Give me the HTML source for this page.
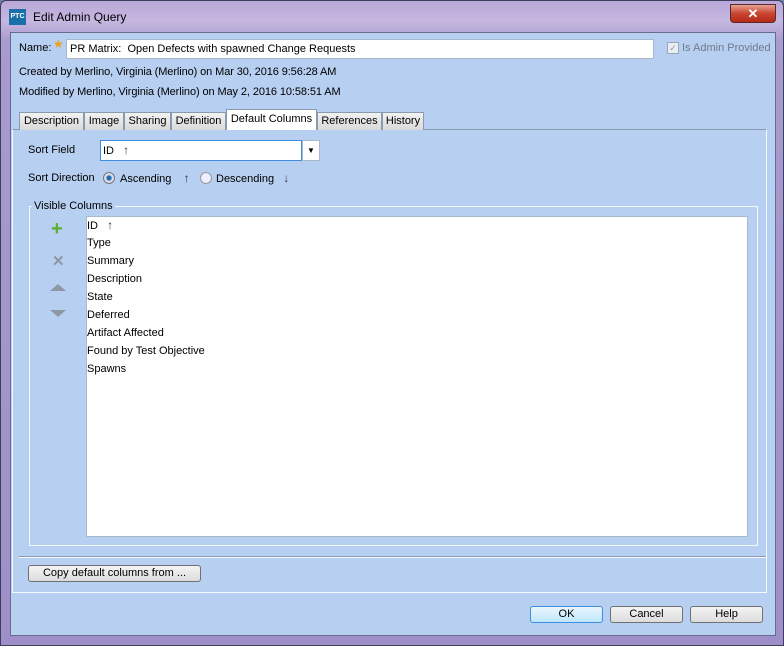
<!DOCTYPE html>
<html><head><style>
*{box-sizing:border-box}
body{margin:0;width:784px;height:646px;overflow:hidden;font-family:"Liberation Sans",sans-serif;font-size:11px;color:#000;background:#6f7fa8;position:relative}
.a{position:absolute}
.frame{left:0;top:0;width:784px;height:646px;background:linear-gradient(180deg,#b9a8d8 0,#c6b7e0 20px,#a89bcf 40px,#9f8fc8 100%);border:1px solid #3d3d5c;border-radius:6px 6px 0 0}
.client{left:10px;top:32px;width:766px;height:604px;background:#b7cff1;border:1px solid #6a6a8a}
.t{white-space:nowrap;line-height:13px}
.tab{top:112px;height:18px;background:linear-gradient(#f2f2f2,#d9d9d9);border:1px solid #8a9ab0;border-bottom:none;text-align:center;line-height:16px}
.btn{background:linear-gradient(#f4f4f4,#dcdcdc);border:1px solid #707070;border-radius:3px;text-align:center;line-height:16px}
.row{left:87px;height:18px;line-height:18px}
.ar{font-weight:bold;color:#334;font-size:12px}
</style></head><body>
<div class="a frame"></div>
<div class="a" style="left:9px;top:9px;width:17px;height:16px;background:#1b6fa8;color:#fff;font-size:7px;font-weight:bold;line-height:16px;text-align:center">PTC</div>
<div class="a t" style="left:33px;top:11px;font-size:12px">Edit Admin Query</div>
<div class="a" style="left:730px;top:4px;width:46px;height:19px;background:linear-gradient(#e8a294,#c9452f 50%,#b52a16);border:1px solid #5a2a2a;border-radius:0 0 4px 4px;color:#fff;font-weight:bold;text-align:center;line-height:17px;font-size:13px">✕</div>
<div class="a client"></div>
<div class="a t" style="left:19px;top:42px">Name:</div>
<div class="a" style="left:53px;top:37px;color:#e9a21a;font-size:12px">★</div>
<div class="a t" style="left:66px;top:39px;width:588px;height:20px;background:#fff;border:1px solid #a9b8cc;padding:3px 3px">PR Matrix:&nbsp; Open Defects with spawned Change Requests</div>
<div class="a" style="left:667px;top:42px;width:12px;height:12px;background:#e8eef6;border:1px solid #9aa8b8;font-size:9px;color:#999;line-height:10px;text-align:center">✓</div>
<div class="a t" style="left:682px;top:42px;color:#707a88">Is Admin Provided</div>
<div class="a t" style="left:19px;top:66px;letter-spacing:-0.1px">Created by Merlino, Virginia (Merlino) on Mar 30, 2016 9:56:28 AM</div>
<div class="a t" style="left:19px;top:86px;letter-spacing:-0.1px">Modified by Merlino, Virginia (Merlino) on May 2, 2016 10:58:51 AM</div>
<div class="a" style="left:12px;top:129px;width:755px;height:464px;border:1px solid #f4f8ff;border-top:1px solid #8a9ab0"></div>
<div class="a tab" style="left:19px;width:65px">Description</div>
<div class="a tab" style="left:84px;width:40px">Image</div>
<div class="a tab" style="left:124px;width:47px">Sharing</div>
<div class="a tab" style="left:171px;width:55px">Definition</div>
<div class="a tab" style="left:226px;top:109px;height:21px;width:91px;background:#fff;line-height:18px">Default Columns</div>
<div class="a tab" style="left:317px;width:65px">References</div>
<div class="a tab" style="left:382px;width:42px">History</div>
<div class="a t" style="left:28px;top:144px">Sort Field</div>
<div class="a t" style="left:100px;top:140px;width:202px;height:21px;background:#fff;border:1px solid #3d8ee0;padding:3px 2px">ID &nbsp;&nbsp;<span class="ar">↑</span></div>
<div class="a" style="left:302px;top:140px;width:18px;height:21px;background:#fff;border:1px solid #a9b8cc;font-size:8px;text-align:center;line-height:19px">▼</div>
<div class="a t" style="left:28px;top:172px">Sort Direction</div>
<div class="a" style="left:103px;top:172px;width:12px;height:12px;border-radius:50%;background:radial-gradient(#1f6fb0 30%,#dde 45%);border:1px solid #777"></div>
<div class="a t" style="left:120px;top:172px">Ascending &nbsp;&nbsp;&nbsp;<span class="ar">↑</span></div>
<div class="a" style="left:200px;top:172px;width:12px;height:12px;border-radius:50%;background:#eef;border:1px solid #999"></div>
<div class="a t" style="left:216px;top:172px">Descending &nbsp;&nbsp;<span class="ar">↓</span></div>
<div class="a" style="left:29px;top:206px;width:729px;height:340px;border:1px solid #f4f8ff"></div>
<div class="a t" style="left:32px;top:200px;background:#b7cff1;padding:0 2px">Visible Columns</div>
<div class="a" style="left:86px;top:216px;width:662px;height:321px;background:#fff;border:1px solid #a9b8cc"></div>
<div class="a" style="left:51px;top:221px;color:#5aae2a;font-weight:bold;font-size:20px;line-height:16px">+</div>
<div class="a" style="left:52px;top:252px;color:#8e98a4;font-weight:bold;font-size:15px">✕</div>
<div class="a" style="left:50px;top:284px;width:0;height:0;border-left:8px solid transparent;border-right:8px solid transparent;border-bottom:7px solid #8e98a4"></div>
<div class="a" style="left:50px;top:310px;width:0;height:0;border-left:8px solid transparent;border-right:8px solid transparent;border-top:7px solid #8e98a4"></div>
<div class="a row t" style="top:216px;line-height:18px">ID &nbsp;&nbsp;<span class="ar">↑</span></div>
<div class="a row t" style="top:234px;line-height:18px">Type</div>
<div class="a row t" style="top:252px;line-height:18px">Summary</div>
<div class="a row t" style="top:270px;line-height:18px">Description</div>
<div class="a row t" style="top:288px;line-height:18px">State</div>
<div class="a row t" style="top:306px;line-height:18px">Deferred</div>
<div class="a row t" style="top:324px;line-height:18px">Artifact Affected</div>
<div class="a row t" style="top:342px;line-height:18px">Found by Test Objective</div>
<div class="a row t" style="top:360px;line-height:18px">Spawns</div>
<div class="a" style="left:19px;top:556px;width:747px;height:2px;border-top:1px solid #8a9ab0;border-bottom:1px solid #f4f8ff"></div>
<div class="a btn t" style="left:28px;top:565px;width:173px;height:17px;line-height:15px">Copy default columns from ...</div>
<div class="a btn" style="left:530px;top:606px;width:73px;height:17px;line-height:15px;border-color:#3d8ee0;background:linear-gradient(#eaf6fd,#bee6fd)">OK</div>
<div class="a btn" style="left:610px;top:606px;width:73px;height:17px;line-height:15px">Cancel</div>
<div class="a btn" style="left:690px;top:606px;width:73px;height:17px;line-height:15px">Help</div>
</body></html>
